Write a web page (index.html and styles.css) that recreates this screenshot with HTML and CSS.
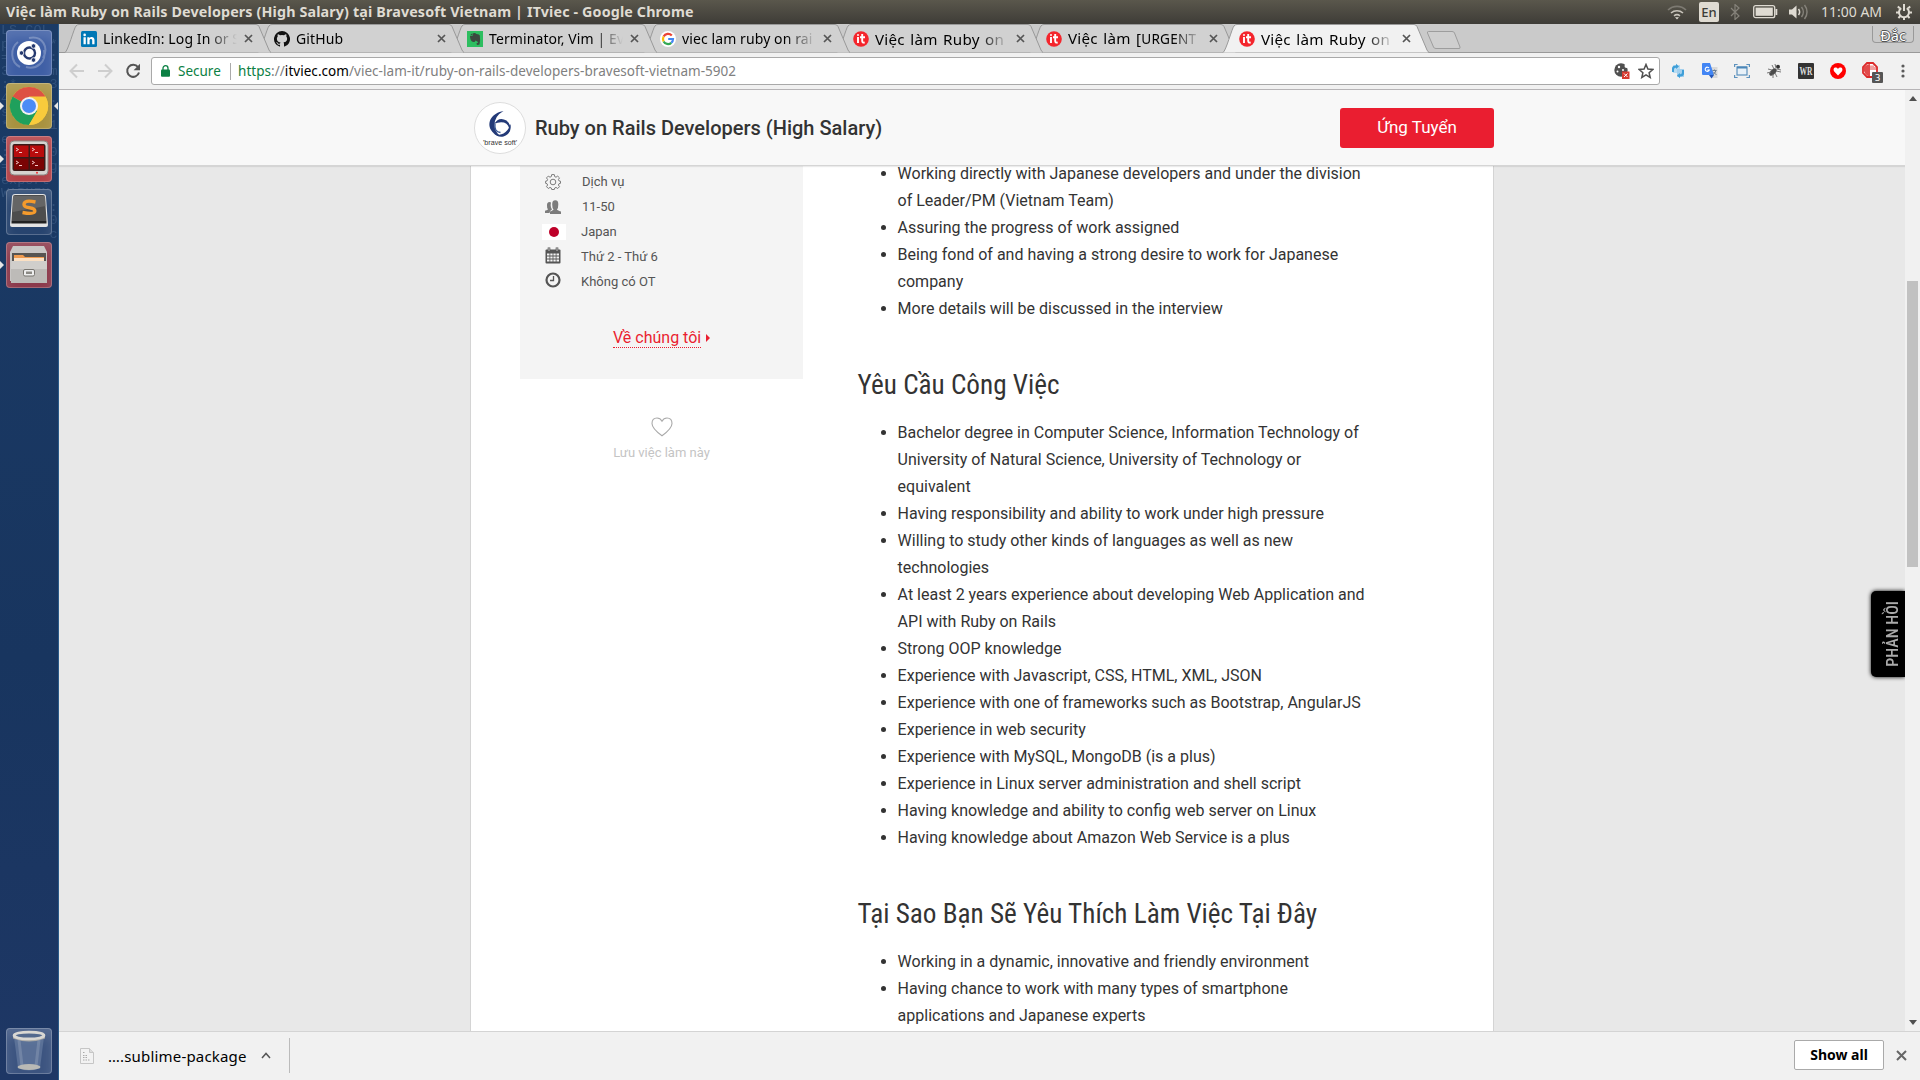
FILE: index.html
```html
<!DOCTYPE html>
<html lang="vi">
<head>
<meta charset="utf-8">
<title>Việc làm Ruby on Rails Developers (High Salary) tại Bravesoft Vietnam | ITviec</title>
<link rel="stylesheet" href="styles.css">
</head>
<body>
<header class="panel">
  <span class="panel-title">Việc làm Ruby on Rails Developers (High Salary) tại Bravesoft Vietnam | ITviec - Google Chrome</span>
  <div class="panel-status">
    <svg class="ic-wifi" width="20" height="16" viewBox="0 0 20 16" fill="none" stroke-width="1.600"><path d="M1 6a13 13 0 0 1 18 0" stroke="#7d7a72"/><path d="M4 9a9 9 0 0 1 12 0M7 11.800a5 5 0 0 1 6 0" stroke="#c9c5bc"/><path d="M8 13.200l2 2.300 2-2.300z" fill="#dfdbd2"/></svg>
    <span class="lang">En</span>
    <svg class="ic-bt" width="10" height="16" viewBox="0 0 10 16" fill="none" stroke="#85827a" stroke-width="1.200"><path d="M1 4l8 8-4 3.500v-15l4 3.500-8 8"/></svg>
    <svg class="ic-bat" width="25" height="14" viewBox="0 0 25 14"><rect x=".7" y=".7" width="21" height="12" rx="2" fill="none" stroke="#dfdbd2" stroke-width="1.300"/><rect x="2.600" y="2.600" width="17.200" height="8.200" fill="#dfdbd2"/><path d="M22.500 4v6h1.800V4z" fill="#dfdbd2"/></svg>
    <svg class="ic-snd" width="20" height="16" viewBox="0 0 20 16" fill="none" stroke-width="1.500"><path d="M0 5.500h3l4.500-4v13L3 10.500H0z" fill="#dfdbd2"/><path d="M9.500 5a5 5 0 0 1 0 6" stroke="#dfdbd2"/><path d="M12.500 3a8 8 0 0 1 0 10M15.500 1a11 11 0 0 1 0 14" stroke="#85827a"/></svg>
    <span class="clock">11:00 AM</span>
    <svg class="ic-gear" width="16" height="16" viewBox="0 0 16 16" fill="none" stroke="#dfdbd2"><path d="M5.200 4.200a5 5 0 1 0 5.600 0" stroke-width="2"/><path d="M8 0v7" stroke-width="2"/><path d="M1.800 2.500l2 1.800M14.200 2.500l-2 1.800M0 8.500h3M16 8.500h-3M2.400 14l2-2M13.600 14l-2-2M8 16v-3" stroke-width="2"/></svg>
  </div>
</header>
<div class="desktop">
<nav class="launcher">
<pre class="ghost">LS_COL
p:    *
=0    :
3     m
:*    3
4     .
s     .
*     1
e     .
:*    0
=     g
export
WARNIN
      :
      0
      c</pre>
  <div class="tile t-dash"><svg width="46" height="46" viewBox="0 0 46 46"><g fill="none" stroke="#fff" stroke-opacity=".25" stroke-width="2"><path d="M23 8c14-3 20 10 14 20M38 20c3 12-8 20-18 17M14 37C4 32 4 18 12 12"/></g><circle cx="23" cy="23" r="12" fill="#fff"/><circle cx="23.500" cy="23" r="5.500" fill="none" stroke="#25396f" stroke-width="2.400"/><g fill="#25396f" stroke="#fff" stroke-width=".8"><circle cx="15.500" cy="23" r="2.300"/><circle cx="27.500" cy="16" r="2.300"/><circle cx="27.500" cy="30" r="2.300"/></g></svg></div>
  <div class="tile t-chrome run focus"><svg width="46" height="46" viewBox="0 0 46 46"><circle cx="23" cy="23" r="19" fill="#f8cb3c"/><path d="M23 23L6.500 13.500A19 19 0 0 1 39.500 13.500H23z" fill="#dd5144"/><path d="M6.500 13.500A19 19 0 0 0 23 42l8.200-14.200L23 23z" fill="#1fa05c"/><path d="M23 23L39.500 13.500A19 19 0 0 1 23 42l8.500-14z" fill="#f8cb3c"/><circle cx="23" cy="23" r="9" fill="#f1f1f1"/><circle cx="23" cy="23" r="7" fill="#4b8bf5"/></svg></div>
  <div class="tile t-term run"><svg width="46" height="46" viewBox="0 0 46 46"><rect x="4" y="5" width="38" height="34" rx="4" fill="#d5d3cf" stroke="#8b8783"/><rect x="6.500" y="8" width="33" height="27" rx="2" fill="#3b1a18"/><g fill="#b80d0d"><rect x="8" y="9.500" width="14.500" height="11.500"/><rect x="24" y="9.500" width="14" height="11.500"/></g><g fill="#7a0404"><rect x="8" y="22.500" width="14.500" height="11"/><rect x="24" y="22.500" width="14" height="11"/></g><path d="M10 12l2.500 1.500-2.500 1.500M13 16.500h3M26 12l2.500 1.500-2.500 1.500M29 16.500h3M10 25l2.500 1.500-2.500 1.500M13 29.500h3M26 25l2.500 1.500-2.500 1.500M29 29.500h3" stroke="#f5c9c9" fill="none"/><circle cx="31" cy="36.800" r="1" fill="#e33"/></svg></div>
  <div class="tile t-subl"><svg width="46" height="46" viewBox="0 0 46 46"><path d="M6 8q0-3 3-3h28q3 0 3 3l2 28q0 2-2 2H6q-2 0-2-2z" fill="#e4e4e4"/><path d="M7 8q0-2 2-2h28q2 0 2 2l1.500 24h-35z" fill="#4d4d4d"/><path d="M7 7h32l.8 10-33 6z" fill="#777" opacity=".6"/><path d="M5.500 32h35v2.500h-35z" fill="#222"/><path d="M29.500 13q-11.500-2.500-11.500 2.500 0 2.500 5.500 3.200 6.500.8 5 4.300-1.500 2.500-12 .5" fill="none" stroke="#f49a2c" stroke-width="3.400"/></svg></div>
  <div class="tile t-files run"><svg width="46" height="46" viewBox="0 0 46 46"><path d="M7 4h31l3 6v29H4V10z" fill="#c9c7c5"/><path d="M6 11h34v8H6z" fill="#575552"/><path d="M8 13h9l2 2h19v4H8z" fill="#ef9b50"/><path d="M8 16h30v3H8z" fill="#fbe0c3"/><path d="M5 19h36v22H5z" fill="#bdbbb8"/><path d="M5 19h36v8H5z" fill="#d0cecb"/><rect x="17.500" y="27.500" width="11" height="6.500" rx="1.500" fill="#eee" stroke="#77746f"/><rect x="20" y="29.500" width="6" height="2.500" fill="#8b8984"/></svg></div>
  <div class="tile t-trash"><svg width="46" height="46" viewBox="0 0 46 46"><path d="M8 9l4 31q11 5 22 0l4-31z" fill="#8fa3c0" opacity=".35"/><path d="M13 12l3 26M33 12l-3 26" stroke="#fff" stroke-opacity=".15" stroke-width="3"/><ellipse cx="23" cy="39" rx="11.500" ry="3" fill="#b9b9b5"/><path d="M7 7.500q16 9 32 0v3q-16 6-32 0z" fill="#aaa9a6"/><ellipse cx="23" cy="7.500" rx="15" ry="3.400" fill="#52698e" stroke="#d8d7d3" stroke-width="2.600"/></svg></div>
</nav>
<div class="browser">
  <div class="tabstrip">
    <div class="tab"><svg class="shape" width="206" height="29"><path d="M0 28.500C3 27 9 4 11 2q1-1.500 3-1.500H191q2 0 3 2L204 26q1 2 2 2.500"/></svg>
      <svg class="fav" width="16" height="16" viewBox="0 0 16 16"><rect width="16" height="16" rx="1.500" fill="#0077b5"/><path d="M2.500 6.200h2.300v7H2.500zM3.650 2.600a1.300 1.300 0 1 1 0 2.600 1.300 1.300 0 0 1 0-2.600zM6.300 6.200h2.200v1c1-1.800 5-1.800 5 1.800v4.200h-2.300V9.500c0-2-2.600-2-2.600 0v3.700H6.300z" fill="#fff"/></svg>
      <span class="name">LinkedIn: Log In or S</span><svg class="x" width="9" height="9" viewBox="0 0 9 9"><path d="M1 1l7 7M8 1L1 8"/></svg></div>
    <div class="tab"><svg class="shape" width="206" height="29"><path d="M0 28.500C3 27 9 4 11 2q1-1.500 3-1.500H191q2 0 3 2L204 26q1 2 2 2.500"/></svg>
      <svg class="fav" width="16" height="16" viewBox="0 0 16 16"><path fill="#111" d="M8 0a8 8 0 0 0-2.530 15.590c.4.070.55-.17.55-.38v-1.490c-2.230.48-2.700-.94-2.700-.94-.36-.92-.89-1.170-.89-1.170-.73-.5.060-.49.060-.49.800.060 1.230.830 1.230.830.710 1.230 1.870.870 2.330.670.070-.52.280-.87.500-1.070-1.770-.2-3.640-.89-3.640-3.950 0-.87.310-1.590.830-2.150-.09-.2-.36-1.020.070-2.120 0 0 .67-.21 2.200.82a7.600 7.600 0 0 1 4 0c1.530-1.040 2.200-.82 2.200-.82.430 1.100.160 1.920.080 2.120.510.560.820 1.270.820 2.150 0 3.070-1.870 3.750-3.650 3.950.290.250.540.730.540 1.480v2.190c0 .21.150.460.550.380A8 8 0 0 0 8 0z"/></svg>
      <span class="name">GitHub</span><svg class="x" width="9" height="9" viewBox="0 0 9 9"><path d="M1 1l7 7M8 1L1 8"/></svg></div>
    <div class="tab"><svg class="shape" width="206" height="29"><path d="M0 28.500C3 27 9 4 11 2q1-1.500 3-1.500H191q2 0 3 2L204 26q1 2 2 2.500"/></svg>
      <svg class="fav" width="16" height="16" viewBox="0 0 16 16"><rect width="16" height="16" fill="#2dbe60"/><path d="M3 5h2.500V2.500Q8 1.500 9.500 3q3 0 3.300 1.500.8 5-.3 9-2.500 1.200-3-.5 0-1.500 1.500-1.300V11Q9 9.500 8.500 9.500q-.5 2-2 1.500Q3 10.500 3 5z" fill="#3c4a40"/><path d="M3 4.300L5 2.500v1.800z" fill="#3c4a40"/></svg>
      <span class="name">Terminator, Vim | Ev</span><svg class="x" width="9" height="9" viewBox="0 0 9 9"><path d="M1 1l7 7M8 1L1 8"/></svg></div>
    <div class="tab"><svg class="shape" width="206" height="29"><path d="M0 28.500C3 27 9 4 11 2q1-1.500 3-1.500H191q2 0 3 2L204 26q1 2 2 2.500"/></svg>
      <svg class="fav" width="16" height="16" viewBox="0 0 16 16"><circle cx="8" cy="8" r="8" fill="#fff"/><g fill="none" stroke-width="2.200"><path d="M11.800 4.600A5 5 0 0 0 3.600 5.600" stroke="#ea4335"/><path d="M3.600 5.600a5 5 0 0 0 0 4.800" stroke="#fbbc05"/><path d="M3.600 10.400a5 5 0 0 0 7.700 1.400" stroke="#34a853"/><path d="M11.300 11.800Q13 10.300 13 8H8.200" stroke="#4285f4"/></g></svg>
      <span class="name">viec lam ruby on rai</span><svg class="x" width="9" height="9" viewBox="0 0 9 9"><path d="M1 1l7 7M8 1L1 8"/></svg></div>
    <div class="tab"><svg class="shape" width="206" height="29"><path d="M0 28.500C3 27 9 4 11 2q1-1.500 3-1.500H191q2 0 3 2L204 26q1 2 2 2.500"/></svg>
      <svg class="fav" width="16" height="16" viewBox="0 0 16 16"><circle cx="8" cy="8" r="7.800" fill="#f4252c"/><path d="M5 6v6M5 3.200v1.500M9.200 3v7q0 2 2.500 1.500M7 6.300h5" fill="none" stroke="#fff" stroke-width="1.900"/></svg>
      <span class="name vn">Việc làm Ruby on</span><svg class="x" width="9" height="9" viewBox="0 0 9 9"><path d="M1 1l7 7M8 1L1 8"/></svg></div>
    <div class="tab"><svg class="shape" width="206" height="29"><path d="M0 28.500C3 27 9 4 11 2q1-1.500 3-1.500H191q2 0 3 2L204 26q1 2 2 2.500"/></svg>
      <svg class="fav" width="16" height="16" viewBox="0 0 16 16"><circle cx="8" cy="8" r="7.800" fill="#f4252c"/><path d="M5 6v6M5 3.200v1.500M9.200 3v7q0 2 2.500 1.500M7 6.300h5" fill="none" stroke="#fff" stroke-width="1.900"/></svg>
      <span class="name vn">Việc làm [<span class="caps">URGENT</span></span><svg class="x" width="9" height="9" viewBox="0 0 9 9"><path d="M1 1l7 7M8 1L1 8"/></svg></div>
    <div class="tab active"><svg class="shape" width="206" height="29"><path d="M0 28.500C3 27 9 4 11 2q1-1.500 3-1.500H191q2 0 3 2L204 26q1 2 2 2.500"/></svg>
      <svg class="fav" width="16" height="16" viewBox="0 0 16 16"><circle cx="8" cy="8" r="7.800" fill="#f4252c"/><path d="M5 6v6M5 3.200v1.500M9.200 3v7q0 2 2.500 1.500M7 6.300h5" fill="none" stroke="#fff" stroke-width="1.900"/></svg>
      <span class="name vn">Việc làm Ruby on</span><svg class="x" width="9" height="9" viewBox="0 0 9 9"><path d="M1 1l7 7M8 1L1 8"/></svg></div>
    <svg class="newtab" width="36" height="18" viewBox="0 0 36 18"><path d="M2.500.5H26q2 0 2.500 1.500l5.500 14q.5 1.500-1 1.500H10q-2 0-2.500-1.500L1.500 2Q1 .5 2.500.5z" fill="#cfcfcf" stroke="#9d9d9d"/></svg>
    <span class="profile">Đắc</span>
  </div>
  <div class="toolbar">
    <svg class="nav back" width="16" height="16" viewBox="0 0 16 16"><path d="M15 8H2M8 1.500L1.500 8 8 14.500"/></svg>
    <svg class="nav fwd" width="16" height="16" viewBox="0 0 16 16"><path d="M1 8h13M8 1.500L14.500 8 8 14.500"/></svg>
    <svg class="reload" width="16" height="16" viewBox="0 0 16 16"><path d="M13 4.200A6 6 0 1 0 14 9.500" fill="none" stroke="#555" stroke-width="2"/><path d="M15 .8v6.400H8.600z" fill="#555"/></svg>
    <div class="omnibox">
      <svg class="lock" width="9" height="12" viewBox="0 0 9 12"><rect y="4.500" width="9" height="7.300" rx="1" fill="#0b8043"/><path d="M2 5V3.200a2.500 2.500 0 0 1 5 0V5" fill="none" stroke="#0b8043" stroke-width="1.300"/></svg>
      <span class="secure">Secure</span><i class="sep"></i>
      <span class="url"><span class="g">https</span>://<b>itviec.com</b>/viec-lam-it/ruby-on-rails-developers-bravesoft-vietnam-5902</span>
      <svg class="cookie" width="16" height="16" viewBox="0 0 16 16"><circle cx="7" cy="7" r="6.700" fill="#505050"/><g fill="#fff"><circle cx="5" cy="4" r="1.200"/><circle cx="9" cy="7" r="1"/><circle cx="3.500" cy="8.500" r="1"/><circle cx="12.500" cy="3" r="2"/></g><rect x="8" y="8.500" width="7.500" height="7.500" fill="#d73b30"/><path d="M10 10.500l3.500 3.500M13.500 10.500L10 14" stroke="#fff"/></svg>
      <svg class="star" width="16" height="16" viewBox="0 0 16 16"><path d="M8 1.500l1.900 4.600 4.900.4-3.700 3.200 1.100 4.800L8 11.900l-4.200 2.600 1.100-4.800L1.200 6.500l4.900-.4z" fill="none" stroke="#505050" stroke-width="1.500"/></svg>
    </div>
    <div class="exts">
      <svg width="16" height="16" viewBox="0 0 16 16"><rect x="3" y="2" width="7" height="8" fill="#b9dcf2"/><rect x="7" y="6" width="7" height="8" fill="#a3d0ee"/><path d="M2 9V5.500q0-3 4-3V.8l3 2.700-3 2.500V4.700Q4 4.500 4 6.500V9zM14 7v3.500q0 3-4 3v1.700l-3-2.700 3-2.500v1.300q2 .2 2-1.800V7z" fill="#3f9fd8"/></svg>
      <svg width="16" height="16" viewBox="0 0 16 16"><path d="M7 4h8.500v11H9z" fill="#d9d9d9"/><path d="M0 1q0-1 1-1h7l4 12H1q-1 0-1-1z" fill="#4285f4"/><path d="M7 12h5l-2.500 3.500z" fill="#2456b8"/><path d="M7 5a2.100 2.100 0 1 0 .3 2H5.300" fill="none" stroke="#fff" stroke-width="1.100"/><path d="M10.500 7.500h4M12.500 6.500v1M14 7.500q-1 3-3 4M11.500 9l3 3" stroke="#6d7f92" fill="none"/></svg>
      <svg width="16" height="16" viewBox="0 0 16 16"><rect x="3" y="4" width="10" height="8" fill="#e8f1f8" stroke="#5d92bd" stroke-width="1.200"/><path d="M3 4.500h10" stroke="#4a86b8" stroke-width="2"/><path d="M.6 4V1.500h3M12.400 1.500h3V4M.6 12v2.500h3M12.400 14.500h3V12" fill="none" stroke="#5d92bd" stroke-width="1.200"/></svg>
      <svg width="16" height="16" viewBox="0 0 16 16"><ellipse cx="7" cy="9" rx="2.500" ry="4.500" transform="rotate(45 7 9)" fill="#4c4c4c"/><circle cx="12" cy="3.700" r="2" fill="#333"/><path d="M8 6L6 2M10 8l5 1M6 7L2 6M9 10l2 4M5 9L1 10M7 11l0 4M10 5l-1-4M11 6l4 1" stroke="#777"/></svg>
      <svg width="16" height="16" viewBox="0 0 16 16"><rect width="16" height="16" rx="1" fill="#333"/><text x="8" y="12" text-anchor="middle" textLength="13" lengthAdjust="spacingAndGlyphs" class="wr">WR</text></svg>
      <svg width="16" height="16" viewBox="0 0 16 16"><circle cx="8" cy="8" r="8" fill="#f00"/><path d="M8 12.500L4 8.300Q2.800 5.500 5 4.600 7 4.200 8 6q1-1.800 3-1.400 2.200.9 1 3.700z" fill="#fff"/></svg>
      <svg width="21" height="21" viewBox="0 0 21 21"><path d="M5 1h6l4 4v6l-4 4H5l-4-4V5z" fill="#fff" stroke="#dc2a2a" stroke-width="1.800"/><path d="M5.500 2.500L8 2v13q-5-2-6-6V5z" fill="#dc2a2a" opacity=".85"/><path d="M9 8V3.500M11 8V3.500M13 8V5" stroke="#dc2a2a" stroke-width=".9"/><rect x="10" y="10" width="11" height="11" rx="1" fill="#555"/><text x="15.500" y="19" text-anchor="middle" class="bd">3</text></svg>
    </div>
    <svg class="menu" width="4" height="14" viewBox="0 0 4 14" fill="#5a5a5a"><circle cx="2" cy="2" r="1.600"/><circle cx="2" cy="7" r="1.600"/><circle cx="2" cy="12" r="1.600"/></svg>
  </div>
  <div class="viewport">
    <div class="page">
      <div class="jobbar"><div class="jobbar-in">
        <svg class="logo" width="52" height="52" viewBox="0 0 52 52"><circle cx="26" cy="26" r="25.500" fill="#fff" stroke="#ddd"/><path d="M29.500 9C18 11 12.500 20 17 28q3 5.500 9.500 6-6-4-6-11Q20.500 14 29.500 9z" fill="#233a78"/><path d="M20 22q5-8 12.500-3.500 5.500 4.500 3 11.500 0-8-5.500-9.500-5-1-10 1.500z" fill="#233a78"/><path d="M36.500 22q1.500 10-7 12.500-6.500 1-10-3.500 5.500 3 10 .5 5-3 7-9.500z" fill="#233a78"/><path d="M21 22q-1 8 5.500 8.500" stroke="#3c5a96" stroke-width="1.300" fill="none"/><text x="26" y="42.500" text-anchor="middle" textLength="34" lengthAdjust="spacingAndGlyphs" class="lg">'brave soft'</text></svg>
        <h1>Ruby on Rails Developers (High Salary)</h1>
        <a class="apply">Ứng Tuyển</a>
      </div></div>
      <div class="sheet">
        <aside>
          <div class="card">
            <ul class="facts">
              <li><svg width="16" height="16" viewBox="0 0 16 16" fill="none" stroke="#7c7c7c"><circle cx="8" cy="8" r="2.800"/><path d="M6.700.6h2.600l.4 2 1.300.6 1.700-1.100 1.800 1.800-1.100 1.700.6 1.300 1.500.3v2.100l-1.500.4-.6 1.300 1.100 1.700-1.800 1.800-1.700-1.100-1.300.6-.4 1.500H6.700l-.4-1.500L5 13.400l-1.700 1.100-1.800-1.800L2.600 11 2 9.700.6 9.300V7.200L2 6.900l.6-1.300-1.100-1.700 1.800-1.800L5 3.200l1.300-.6z"/></svg><span>Dịch vụ</span></li>
              <li><svg width="16" height="14" viewBox="0 0 16 14" fill="#7c7c7c"><path d="M0 13v-2.200q3-1 3-1.600Q1.800 8 2 5.500 1.800 2 4.500 2q1 0 1.500.6Q5.300 5 6 7.500L7 9.500Q4.500 10.500 4.500 13z"/><path d="M5 14v-2.500q3.500-1.300 3.500-2Q7.200 8 7.200 4.500 7 .2 10.300.2q3.200 0 3 4.300 0 3.500-1.300 5 0 .7 4 2V14z"/></svg><span>11-50</span></li>
              <li class="wide"><svg width="24" height="16" viewBox="0 0 24 16"><rect width="24" height="16" fill="#fff"/><circle cx="12" cy="8" r="5" fill="#be0029"/></svg><span>Japan</span></li>
              <li class="wide up"><svg width="16" height="17" viewBox="0 0 16 17"><path d="M.5 3.500q0-1 1-1h13q1 0 1 1v12q0 1-1 1h-13q-1 0-1-1z" fill="#555"/><path d="M4 .5v4M12 .5v4" stroke="#555" stroke-width="2.600"/><path d="M4 1v3M12 1v3" stroke="#f4f4f4" stroke-width=".7"/><g fill="#f4f4f4"><path d="M2 6.500h2.500v2H2zM5.300 6.500h2.300v2H5.300zM8.400 6.500h2.300v2H8.400zM11.500 6.500h2.500v2h-2.500zM2 9.500h2.500v2H2zM5.300 9.500h2.300v2H5.300zM8.400 9.500h2.300v2H8.400zM11.500 9.500h2.500v2h-2.500zM2 12.500h2.500v2H2zM5.300 12.500h2.300v2H5.300zM8.400 12.500h2.300v2H8.400zM11.500 12.500h2.500v2h-2.500z"/></g></svg><span>Thứ 2 - Thứ 6</span></li>
              <li class="wide up"><svg width="16" height="16" viewBox="0 0 16 16" fill="none" stroke="#555"><circle cx="8" cy="8" r="6.500" stroke-width="2.200"/><path d="M8.500 4v4.500H5" stroke-width="1.300"/></svg><span>Không có OT</span></li>
            </ul>
            <p class="about"><a>Về chúng tôi</a><svg width="4" height="8" viewBox="0 0 4 8"><path d="M0 0l4 4-4 4z" fill="#ea1e30"/></svg></p>
          </div>
          <div class="save"><svg width="22" height="20" viewBox="0 0 22 20"><path d="M11 18.800Q1 11.500 1 6.500 1 1 6 1q3.300 0 5 3.200Q12.700 1 16 1q5 0 5 5.500 0 5-10 12.300z" fill="none" stroke="#aaa" stroke-width="1.100"/></svg><span>Lưu việc làm này</span></div>
        </aside>
        <main>
          <ul>
            <li>Working directly with Japanese developers and under the division of Leader/PM (Vietnam Team)</li>
            <li>Assuring the progress of work assigned</li>
            <li>Being fond of and having a strong desire to work for Japanese company</li>
            <li>More details will be discussed in the interview</li>
          </ul>
          <h2>Yêu Cầu Công Việc</h2>
          <ul>
            <li>Bachelor degree in Computer Science, Information Technology of University of Natural Science, University of Technology or equivalent</li>
            <li>Having responsibility and ability to work under high pressure</li>
            <li>Willing to study other kinds of languages as well as new technologies</li>
            <li>At least 2 years experience about developing Web Application and API with Ruby on Rails</li>
            <li>Strong OOP knowledge</li>
            <li>Experience with Javascript, CSS, HTML, XML, JSON</li>
            <li>Experience with one of frameworks such as Bootstrap, AngularJS</li>
            <li>Experience in web security</li>
            <li>Experience with MySQL, MongoDB (is a plus)</li>
            <li>Experience in Linux server administration and shell script</li>
            <li>Having knowledge and ability to config web server on Linux</li>
            <li>Having knowledge about Amazon Web Service is a plus</li>
          </ul>
          <h2>Tại Sao Bạn Sẽ Yêu Thích Làm Việc Tại Đây</h2>
          <ul>
            <li>Working in a dynamic, innovative and friendly environment</li>
            <li>Having chance to work with many types of smartphone applications and Japanese experts</li>
          </ul>
        </main>
      </div>
      <div class="feedback"><span>PHẢN HỒI</span></div>
    </div>
    <div class="scrollbar">
      <svg width="8" height="5" viewBox="0 0 8 5"><path d="M0 5l4-5 4 5z" fill="#505050"/></svg>
      <i class="thumb"></i>
      <svg width="8" height="5" viewBox="0 0 8 5"><path d="M0 0l4 5 4-5z" fill="#505050"/></svg>
    </div>
  </div>
  <div class="downloads">
    <svg class="file" width="14" height="16" viewBox="0 0 14 16"><path d="M.5.5h9l4 4v11H.5z" fill="#f2f2f2" stroke="#c6c6c6"/><path d="M9.500.5v4h4" fill="#ddd" stroke="#c6c6c6"/><path d="M3 4.500h2M3 7.500h4M3 9.500h5M3 12h7" stroke="#aaa" stroke-dasharray="1.500 1"/></svg>
    <span class="fname">….sublime-package</span>
    <svg class="chev" width="10" height="7" viewBox="0 0 10 7"><path d="M1 6l4-4.500L9 6" fill="none" stroke="#555" stroke-width="1.500"/></svg>
    <i class="dsep"></i>
    <span class="showall">Show all</span>
    <svg class="dx" width="11" height="11" viewBox="0 0 11 11"><path d="M1 1l9 9M10 1l-9 9" stroke="#666" stroke-width="2"/></svg>
  </div>
</div>
</div>
</body>
</html>
```
FILE: styles.css
```css
* { box-sizing: border-box; }
body { margin: 0; width: 1920px; height: 1080px; overflow: hidden; font-family: Roboto, "Noto Sans", sans-serif; color: #333; }
svg { display: block; flex: none; }
ul, h1, h2, p { margin: 0; padding: 0; font-weight: 400; }

/* desktop top panel */
.panel { display: flex; justify-content: space-between; align-items: center; height: 24px; padding: 0 8px 0 6px; background: linear-gradient(#5a574c, #3e3c37); font-family: "Noto Sans", sans-serif; color: #dfdbd2; white-space: nowrap; }
.panel-title { font-size: 14.3px; font-weight: 700; line-height: 24px; letter-spacing: .14px; }
.panel-status { display: flex; align-items: center; font-size: 14px; }
.lang { width: 20px; height: 20px; margin: 0 11px 0 12px; border-radius: 2px; background: #dfdbd2; color: #3c3b37; font-size: 13px; font-weight: 500; line-height: 20px; text-align: center; }
.ic-wifi { margin-left: 1px; }
.ic-bat { margin-left: 13px; }
.ic-snd { margin-left: 11px; }
.clock { width: 61px; margin: 0 14px 0 12px; line-height: 22px; }

.desktop { display: flex; height: 1056px; }

/* launcher */
.launcher { position: relative; display: flex; flex-direction: column; gap: 7px; width: 59px; padding: 6px 6px; background: linear-gradient(#1b3b66, #18355f 60%, #1e3765); border-right: 1px solid #2a5a88; overflow: hidden; }
.ghost { position: absolute; left: 1px; top: 0; margin: 0; font: 13.5px/13.6px "Liberation Mono", monospace; color: #7fa0c8; opacity: .22; }
.tile { position: relative; width: 46px; height: 46px; border-radius: 4px; box-shadow: inset 0 0 0 1px rgba(255,255,255,.22), inset 0 8px 12px rgba(255,255,255,.14); }
.tile:last-child { margin-top: auto; }
.t-dash { background: #3f5fa5; }
.t-chrome { background: #a8923f; }
.t-term { background: #b34147; }
.t-subl { background: #27446f; }
.t-files { background: #8c3a4c; }
.t-trash { background: #3c5480; }
.run::before { content: ""; position: absolute; left: -6px; top: 19px; border: 4px solid transparent; border-left-color: #e6e6e6; border-right: 0; }
.focus::after { content: ""; position: absolute; right: -6px; top: 19px; border: 4px solid transparent; border-right-color: #e6e6e6; border-left: 0; }

.browser { display: flex; flex-direction: column; width: 1861px; background: #f1f1f1; font-family: "Noto Sans", sans-serif; }

/* tabs */
.tabstrip { position: relative; display: flex; height: 29px; padding-left: 6px; background: #cacaca; box-shadow: inset 0 -1px #999; white-space: nowrap; }
.tab { position: relative; display: flex; align-items: center; width: 193px; height: 29px; padding-left: 16px; color: #000; font-size: 14px; }
.tab:nth-child(1) { z-index: 6; } .tab:nth-child(2) { z-index: 5; } .tab:nth-child(3) { z-index: 4; }
.tab:nth-child(4) { z-index: 3; } .tab:nth-child(5) { z-index: 2; } .tab:nth-child(6) { z-index: 1; }
.tab.active { z-index: 8; }
.shape { position: absolute; left: 0; top: 0; fill: #d1d1d1; stroke: #999; overflow: visible; }
.active .shape { fill: #f1f1f1; }
.fav, .name, .x { position: relative; }
.name { width: 134px; margin: 0 7px 0 6px; line-height: 24px; letter-spacing: .1px; -webkit-mask: linear-gradient(90deg, #000 78%, transparent); mask: linear-gradient(90deg, #000 78%, transparent); }
.name.vn { font-size: 15.2px; letter-spacing: .25px; word-spacing: 1.2px; }
.name .caps { font-size: 13.6px; letter-spacing: .2px; }
.x { fill: none; stroke: #555; stroke-width: 1.7; }
.newtab { margin: 7px 0 0 10px; }
.profile { margin: 2px 6px 0 auto; width: 42px; height: 17px; border: 1px solid #999; border-top: 0; border-radius: 0 0 4px 4px; color: #fff; font-size: 14.5px; line-height: 18px; text-align: center; text-shadow: 1px 0 #555, -1px 0 #555, 0 1px #555, 0 -1px #555; }

/* toolbar */
.toolbar { display: flex; align-items: center; height: 37px; padding-left: 10px; border-bottom: 1px solid #b6b4b6; font-size: 13.5px; white-space: nowrap; }
.nav { fill: none; stroke: #cecece; stroke-width: 2; margin-right: 12px; }
.reload { margin: 0 10px 0 0; }
.omnibox { display: flex; align-items: center; width: 1509px; height: 28px; padding: 0 5px 0 9px; border: 1px solid #a9a9a9; border-radius: 3px; background: #fff; }
.lock { margin-right: 8px; }
.secure { width: 43px; color: #0b8043; }
.sep { width: 1px; height: 17px; margin: 0 7px 0 9px; background: #aaa; }
.url { flex: 1; color: #808080; letter-spacing: .04px; }
.url .g { color: #0b8043; }
.url b { color: #000; font-weight: 400; }
.cookie { margin-right: 8px; }
.exts { display: flex; align-items: center; gap: 16px; width: 214px; margin-left: 10px; }
.exts svg:last-child { margin-top: 3px; }
.wr { font: 700 12px "Liberation Serif", serif; fill: #ddd; }
.bd { font: 9px "DejaVu Sans", sans-serif; fill: #fff; }
.menu { margin-left: 17px; }

/* page */
.viewport { display: flex; height: 941px; }
.page { position: relative; width: 1846px; height: 941px; overflow: hidden; background: #e8e8e8; font-family: Roboto, sans-serif; }
.jobbar { position: relative; z-index: 2; height: 76px; background: #f8f8f8; border-bottom: 1px solid #d5d5d5; box-shadow: 0 1px 1px rgba(0,0,0,.08); }
.jobbar-in { display: flex; align-items: center; width: 1020px; height: 75px; margin-left: 415px; }
.jobbar h1 { margin-left: 9px; font-size: 20px; font-weight: 500; line-height: 24px; }
.lg { font: 8px "Liberation Sans", sans-serif; fill: #333; }
.apply { width: 154px; height: 40px; margin-left: auto; border-radius: 3px; background: #ea1e30; color: #fff; font-size: 17px; line-height: 39px; text-align: center; }
.sheet { display: flex; width: 1024px; height: 900px; margin-left: 411px; border: 1px solid #d4d4d4; border-top: 0; background: #fff; }
aside { width: 283px; margin-left: 49px; }
.card { height: 213px; padding-top: 3px; background: #f4f4f4; }
.facts { list-style: none; color: #555; font-size: 13px; line-height: 25px; }
.facts li { display: flex; align-items: center; height: 25px; padding-left: 25px; }
.facts span { margin-left: 21px; }
.facts .wide svg { margin-left: 1px; }
.facts .up svg { margin: 0 1px 3px 0; }
.facts .wide span { margin-left: 19px; }
.facts li:nth-child(3) { padding-left: 21px; }
.facts li:nth-child(3) span { margin-left: 15px; }
.about { display: flex; align-items: center; gap: 5px; margin: 34px 0 0 93px; font-size: 16px; color: #ea1e30; }
.about a { border-bottom: 1px dotted #ea1e30; line-height: 19px; }
.save { display: flex; flex-direction: column; align-items: center; gap: 8px; margin-top: 38px; color: #c4c4c4; font-size: 13px; line-height: 16px; }
main { width: 511px; margin: -6px 0 0 54.6px; }
main ul { padding-left: 40px; font-size: 16px; line-height: 27px; }
h2 { margin: 45px 0 15px; font-family: "Roboto Condensed", Roboto, sans-serif; font-size: 27.2px; line-height: 37px; white-space: nowrap; }
.feedback { position: absolute; right: 0; top: 501px; display: flex; align-items: center; justify-content: center; width: 34px; height: 86px; padding-left: 9px; border-radius: 5px 0 0 5px; background: #000; box-shadow: 0 0 4px #000; color: #aaa; font-family: "Roboto Condensed", Roboto, sans-serif; font-size: 16px; font-weight: 500; }
.feedback span { writing-mode: vertical-rl; transform: rotate(180deg); white-space: nowrap; }
.scrollbar { display: flex; flex-direction: column; align-items: center; width: 15px; padding: 6px 0; background: #f1f1f1; }
.thumb { width: 11px; height: 286px; margin: 180px 0 auto; background: #c1c1c1; }

/* downloads */
.downloads { display: flex; align-items: center; height: 49px; padding: 0 13px 1px 21px; border-top: 1px solid #d4d4d4; background: #f1f1f1; color: #000; font-size: 15px; white-space: nowrap; }
.fname { width: 138px; margin: 1px 15px 0 14px; letter-spacing: .18px; }
.dsep { width: 1px; height: 35px; margin-left: 18px; background: #bbb; }
.showall { width: 90px; height: 30px; margin: 0 0 1px auto; border: 1px solid #aaa; border-radius: 2px; background: #fff; font-size: 14px; font-weight: 700; line-height: 28px; text-align: center; }
.dx { margin-left: 12px; }
```
